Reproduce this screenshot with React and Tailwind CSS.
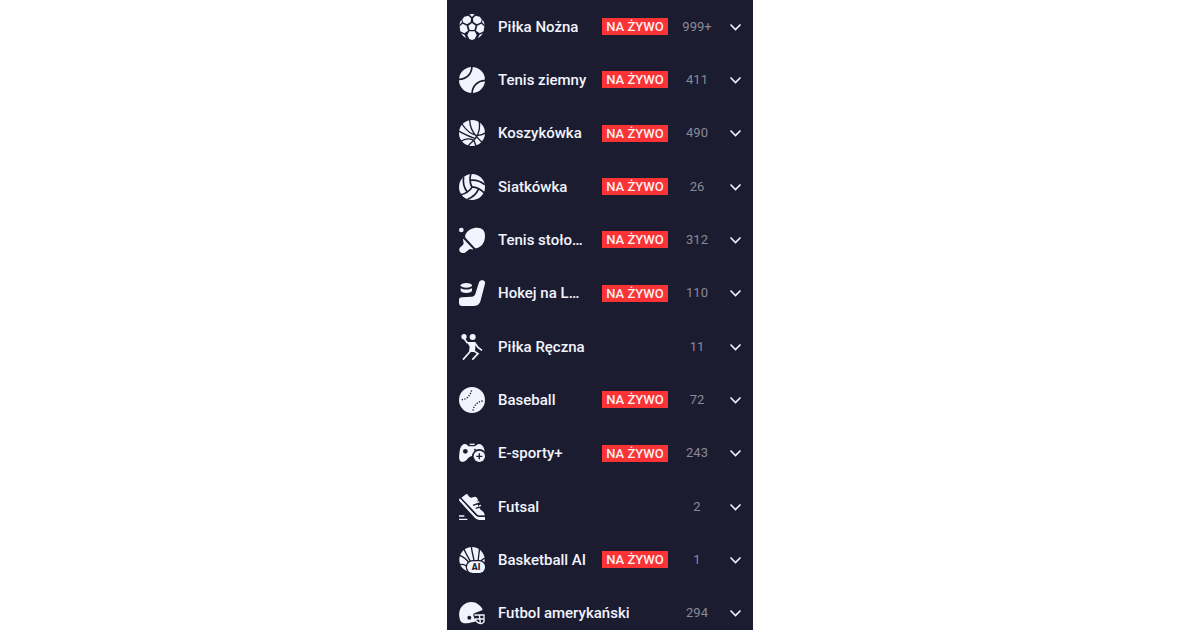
const BG = "#1c1c31";

const icons = {
  football: (
    <>
      <path d="M39 27 50 35 46 48H32L28 35Z" />
      <path d="M16 8 28 5 36 13 35 24 24 31 12 25 10 16Z" />
      <path d="M62 8 50 5 42 13 43 24 54 31 66 25 68 16Z" />
      <path d="M55 35 67 29 76 37 74 52 62 58 51 50Z" />
      <path d="M23 35 11 29 2 37 4 52 16 58 27 50Z" />
      <path d="M31 52H47L53 63 47 75 39 78 31 75 25 63Z" />
      <path d="M31 1Q39-1 47 1L39 9ZM7 17 9 25 1 33Q2 24 7 17ZM71 17 69 25 77 33Q76 24 71 17ZM6 58 16 62 22 73Q12 68 6 58ZM72 58 62 62 56 73Q66 68 72 58Z" />
    </>
  ),
  tennis: (
    <>
      <circle cx="39" cy="39" r="39" />
      <path d="M39-2C38 22 22 37-2 37M80 40C56 41 40 56 39 80" fill="none" stroke={BG} strokeWidth="5" />
    </>
  ),
  basketball: (
    <>
      <circle cx="39" cy="39" r="39" />
      <path
        d="M9 12C22 32 38 45 56 46C66 46 74 43 80 38M32-2C32 20 42 38 52 49C58 56 64 62 70 68M60 0C64 22 60 40 50 54C44 63 34 69 26 80M-2 33C16 42 34 52 51 56M6 64C18 55 36 54 45 62L52 80"
        fill="none"
        stroke={BG}
        strokeWidth="4"
      />
    </>
  ),
  volleyball: (
    <>
      <circle cx="39" cy="39" r="39" />
      <g fill="none" stroke={BG} strokeWidth="5">
        <path d="M39 40C32 27 31 14 36-2M33 19C50 17 64 21 77 32" />
        <path transform="rotate(120 39 39)" d="M39 40C32 27 31 14 36-2M33 19C50 17 64 21 77 32" />
        <path transform="rotate(240 39 39)" d="M39 40C32 27 31 14 36-2M33 19C50 17 64 21 77 32" />
      </g>
    </>
  ),
  tableTennis: (
    <>
      <circle cx="7" cy="9" r="7" />
      <path d="M19 24C25 8 40 2 54 2C70 2 78 10 78 26C78 47 67 60 52 64C49 64 47 62 45 60L20 33C18 31 18 27 19 24Z" />
      <path d="M13 35 43 67C38 68 34 64 29 68L18 77C11 81-1 76 1 66C1 62 10 57 13 52C16 46 10 42 13 35Z" />
    </>
  ),
  hockey: (
    <>
      <path d="M60 7C64-3 81 0 78 11L65 61C62 73 56 78 44 78H10C3 78 0 74 0 68V60C0 54 4 52 10 52L38 50C44 50 47 47 49 42Z" />
      <ellipse cx="22" cy="16" rx="17" ry="7" />
      <path d="M5 25C14 30 30 30 39 25V33C34 41 10 41 5 33Z" />
    </>
  ),
  handball: (
    <>
      <circle cx="15" cy="8" r="8" />
      <circle cx="41" cy="9" r="9" />
      <path d="M24 24H50L48 54H30L32 38Z" />
      <path d="M14 12 26 28M48 28 57 40 69 49M35 51 12 77M43 50 57 59 40 77" fill="none" stroke="currentColor" strokeWidth="5" />
    </>
  ),
  baseball: (
    <>
      <circle cx="39" cy="39" r="39" />
      <path d="M8 38C22 38 35 26 38 8M42 71C44 56 56 43 72 42" fill="none" stroke={BG} strokeWidth="4" strokeDasharray="4 4" />
    </>
  ),
  esports: (
    <>
      <path d="M10 15C15 10 22 11 27 17C29 19 31 19 33 19H45C48 19 50 18 52 16C57 11 63 10 68 15C75 20 77 30 77 42L50 52C38 44 32 50 25 57C20 63 14 67 7 65C-1 62 0 50 1 42C2 30 4 20 10 15Z" />
      <path d="M32 11H47V15H32Z" />
      <circle cx="19" cy="34" r="7" fill={BG} />
      <circle cx="48" cy="29" r="3" fill={BG} />
      <circle cx="61" cy="49" r="22" fill={BG} />
      <circle cx="61" cy="49" r="17" />
      <path d="M61 40V58M52 49H70" stroke={BG} strokeWidth="4" />
    </>
  ),
  futsal: (
    <>
      <path d="M7 11 22 0C27-2 28 10 36 11L48 8C52 8 57 14 57 18L53 26 60 40C64 50 78 52 77 65L58 65Z" />
      <path d="M3 13C0 15-1 19 2 22L48 72C53 77 58 78 66 78H78V69H61C54 69 51 65 47 61Z" />
      <path d="M5 12 49 61Q53 66 61 66H80" fill="none" stroke={BG} strokeWidth="3" />
      <path d="M42 34 62 27M50 43 66 38" fill="none" stroke={BG} strokeWidth="4" />
      <path d="M53 26 61 23M60 36 66 34" fill="none" stroke="currentColor" strokeWidth="4" />
      <path d="M0 66H16M0 76H25" stroke="currentColor" strokeWidth="4" />
    </>
  ),
  basketballAi: (
    <>
      <circle cx="39" cy="38" r="38" />
      <path d="M14 4C20 20 28 32 36 46M37-2C38 14 44 30 46 46M62 2C60 20 58 32 57 46M-2 24C12 28 24 38 32 50M-2 54C10 50 20 52 26 62M80 34C72 34 68 38 64 46" fill="none" stroke={BG} strokeWidth="4" />
      <rect x="20" y="39" width="62" height="42" rx="21" fill={BG} />
      <rect x="24" y="43" width="54" height="35" rx="17" />
      <text x="51" y="70" textAnchor="middle" fontSize="26" fontWeight="900" fill={BG}>
        AI
      </text>
    </>
  ),
  americanFootball: (
    <>
      <path d="M4 62C-4 40 2 24 13 15C27 2 50 4 61 16C67 21 70 26 71 30L46 40C42 42 42 45 44 49L50 64C44 68 36 67 31 69C20 70 10 72 4 62Z" />
      <circle cx="31" cy="53" r="6" fill={BG} />
      <path d="M46 45H75V66L68 71C58 70 52 66 48 58M48 57H75M61 45 64 68" fill="none" stroke="currentColor" strokeWidth="4" />
    </>
  ),
};

const sports = [
  { name: "Piłka Nożna", icon: "football", count: "999+", live: true },
  { name: "Tenis ziemny", icon: "tennis", count: "411", live: true },
  { name: "Koszykówka", icon: "basketball", count: "490", live: true },
  { name: "Siatkówka", icon: "volleyball", count: "26", live: true },
  { name: "Tenis stołowy", icon: "tableTennis", count: "312", live: true },
  { name: "Hokej na Lodzie", icon: "hockey", count: "110", live: true },
  { name: "Piłka Ręczna", icon: "handball", count: "11", live: false },
  { name: "Baseball", icon: "baseball", count: "72", live: true },
  { name: "E-sporty+", icon: "esports", count: "243", live: true },
  { name: "Futsal", icon: "futsal", count: "2", live: false },
  { name: "Basketball AI", icon: "basketballAi", count: "1", live: true },
  { name: "Futbol amerykański", icon: "americanFootball", count: "294", live: false },
];

function SportRow({ sport }) {
  const { name, icon, count, live } = sport;
  return (
    <li className="flex min-w-0">
      <button type="button" aria-expanded="false" className="flex w-full min-w-0 items-center gap-[13px] pl-3 pr-[9px] text-left">
        <svg viewBox="0 0 78 78" fill="currentColor" aria-hidden="true" className="size-[26px] shrink-0 text-[#f1f4fd]">
          {icons[icon]}
        </svg>
        <span className="mr-0.5 min-w-0 flex-1 truncate text-[15px] leading-5 font-medium text-[#f1f4fd]">{name}</span>
        {live && (
          <span className="w-[66px] shrink-0 bg-[#fb3334] text-center text-[13px] leading-[17px] font-medium text-[#fdeef2]">
            NA ŻYWO
          </span>
        )}
        <span className="w-8 shrink-0 text-center text-[13px] leading-5 text-[#8a8a97]">{count}</span>
        <svg viewBox="0 0 18 18" fill="none" stroke="currentColor" strokeWidth="1.6" aria-hidden="true" className="size-[18px] shrink-0 text-[#f1f4fd]">
          <path d="M4.5 6.5 9.5 11.5 14.5 6.5" />
        </svg>
      </button>
    </li>
  );
}

export default function App() {
  return (
    <div className="flex h-screen justify-center overflow-hidden bg-white font-[Roboto,sans-serif]">
      <nav aria-label="Sporty" className="w-full max-w-[306px]">
        <ul className="grid min-h-[640px] auto-rows-fr grid-cols-1 bg-[#1c1c31]">
          {sports.map((sport) => (
            <SportRow key={sport.name} sport={sport} />
          ))}
        </ul>
      </nav>
    </div>
  );
}
